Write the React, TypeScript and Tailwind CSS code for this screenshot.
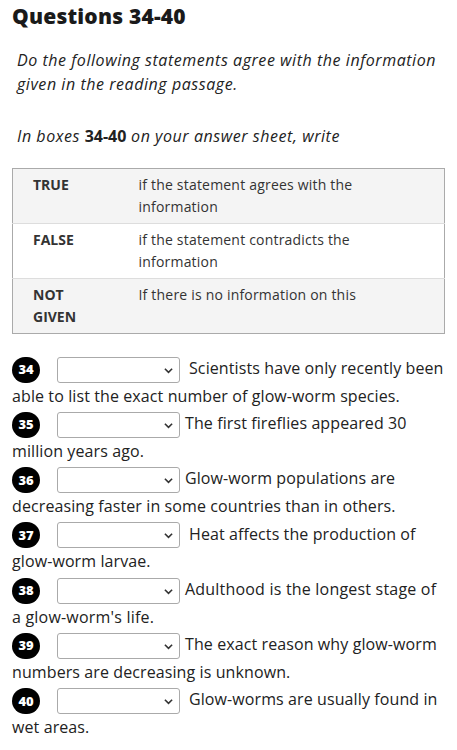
import React from 'react'

const rows = [
  { label: 'TRUE', text: 'if the statement agrees with the information', bg: 'bg-[#f4f4f4]' },
  { label: 'FALSE', text: 'if the statement contradicts the information', bg: 'bg-white' },
  { label: 'NOT GIVEN', text: 'If there is no information on this', bg: 'bg-[#f4f4f4]' },
]

const questions = [
  { n: 34, text: 'Scientists have only recently been able to list the exact number of glow-worm species.', pad: true, wide: false },
  { n: 35, text: 'The first fireflies appeared 30 million years ago.', pad: false, wide: false },
  { n: 36, text: 'Glow-worm populations are decreasing faster in some countries than in others.', pad: false, wide: false },
  { n: 37, text: 'Heat affects the production of glow-worm larvae.', pad: true, wide: false },
  { n: 38, text: "Adulthood is the longest stage of a glow-worm's life.", pad: false, wide: true },
  { n: 39, text: 'The exact reason why glow-worm numbers are decreasing is unknown.', pad: false, wide: false },
  { n: 40, text: 'Glow-worms are usually found in wet areas.', pad: true, wide: false },
]

export default function App() {
  return (
    <div className="min-h-screen bg-white text-[#222] px-3 font-['Open_Sans',sans-serif]">
      <h1 className="pt-[4px] text-[21px] leading-[24px] font-extrabold tracking-[0.2px] text-[#1a1a1a]">
        Questions 34-40
      </h1>

      <p className="mt-[20px] pl-[5px] text-[16px] leading-[24px] italic tracking-[0.55px]">
        Do the following statements agree with the information given in the reading passage.
      </p>
      <p className="mt-[28px] pl-[5px] text-[16px] leading-[24px] italic tracking-[0.55px]">
        In boxes <span className="font-bold not-italic tracking-normal">34-40</span> on your answer sheet, write
      </p>

      <table className="mt-[20px] w-full border border-[#aaaaaa] border-collapse text-[14px] leading-[22px]">
        <tbody>
          {rows.map((r, i) => (
            <tr key={r.label} className={`${r.bg} ${i > 0 ? 'border-t border-[#dddddd]' : ''}`}>
              <td className="w-[126px] pl-[20px] pr-[44px] pt-[5px] pb-[5px] align-top font-bold text-[#333]">
                {r.label}
              </td>
              <td className="pr-[60px] pt-[5px] pb-[5px] align-top text-[#333] tracking-[0.2px]">{r.text}</td>
            </tr>
          ))}
        </tbody>
      </table>

      <div className="mt-[21px] text-[16px] leading-[27.5px]">
        {questions.map((q) => (
          <div key={q.n} className={q.wide ? 'tracking-[0.2px]' : 'tracking-[0.1px]'}>
            <span className="inline-flex w-[28px] h-[26px] mr-[17px] rounded-full bg-black text-white text-[13px] leading-none font-extrabold tracking-normal items-center justify-center align-middle">
              {q.n}
            </span>
            <span className="relative inline-block w-[123px] h-[26px] mr-[5px] border border-[#aaaaaa] rounded-[3px] bg-white align-middle">
              <svg className="absolute right-[6px] top-[9px] w-[9px] h-[7px]" viewBox="0 0 10 7" fill="none">
                <path d="M1 1.5l4 4 4-4" stroke="#333" strokeWidth="1.8" />
              </svg>
            </span>
            <span className={q.pad ? 'pl-[4px]' : ''}>{q.text}</span>
          </div>
        ))}
      </div>
    </div>
  )
}
